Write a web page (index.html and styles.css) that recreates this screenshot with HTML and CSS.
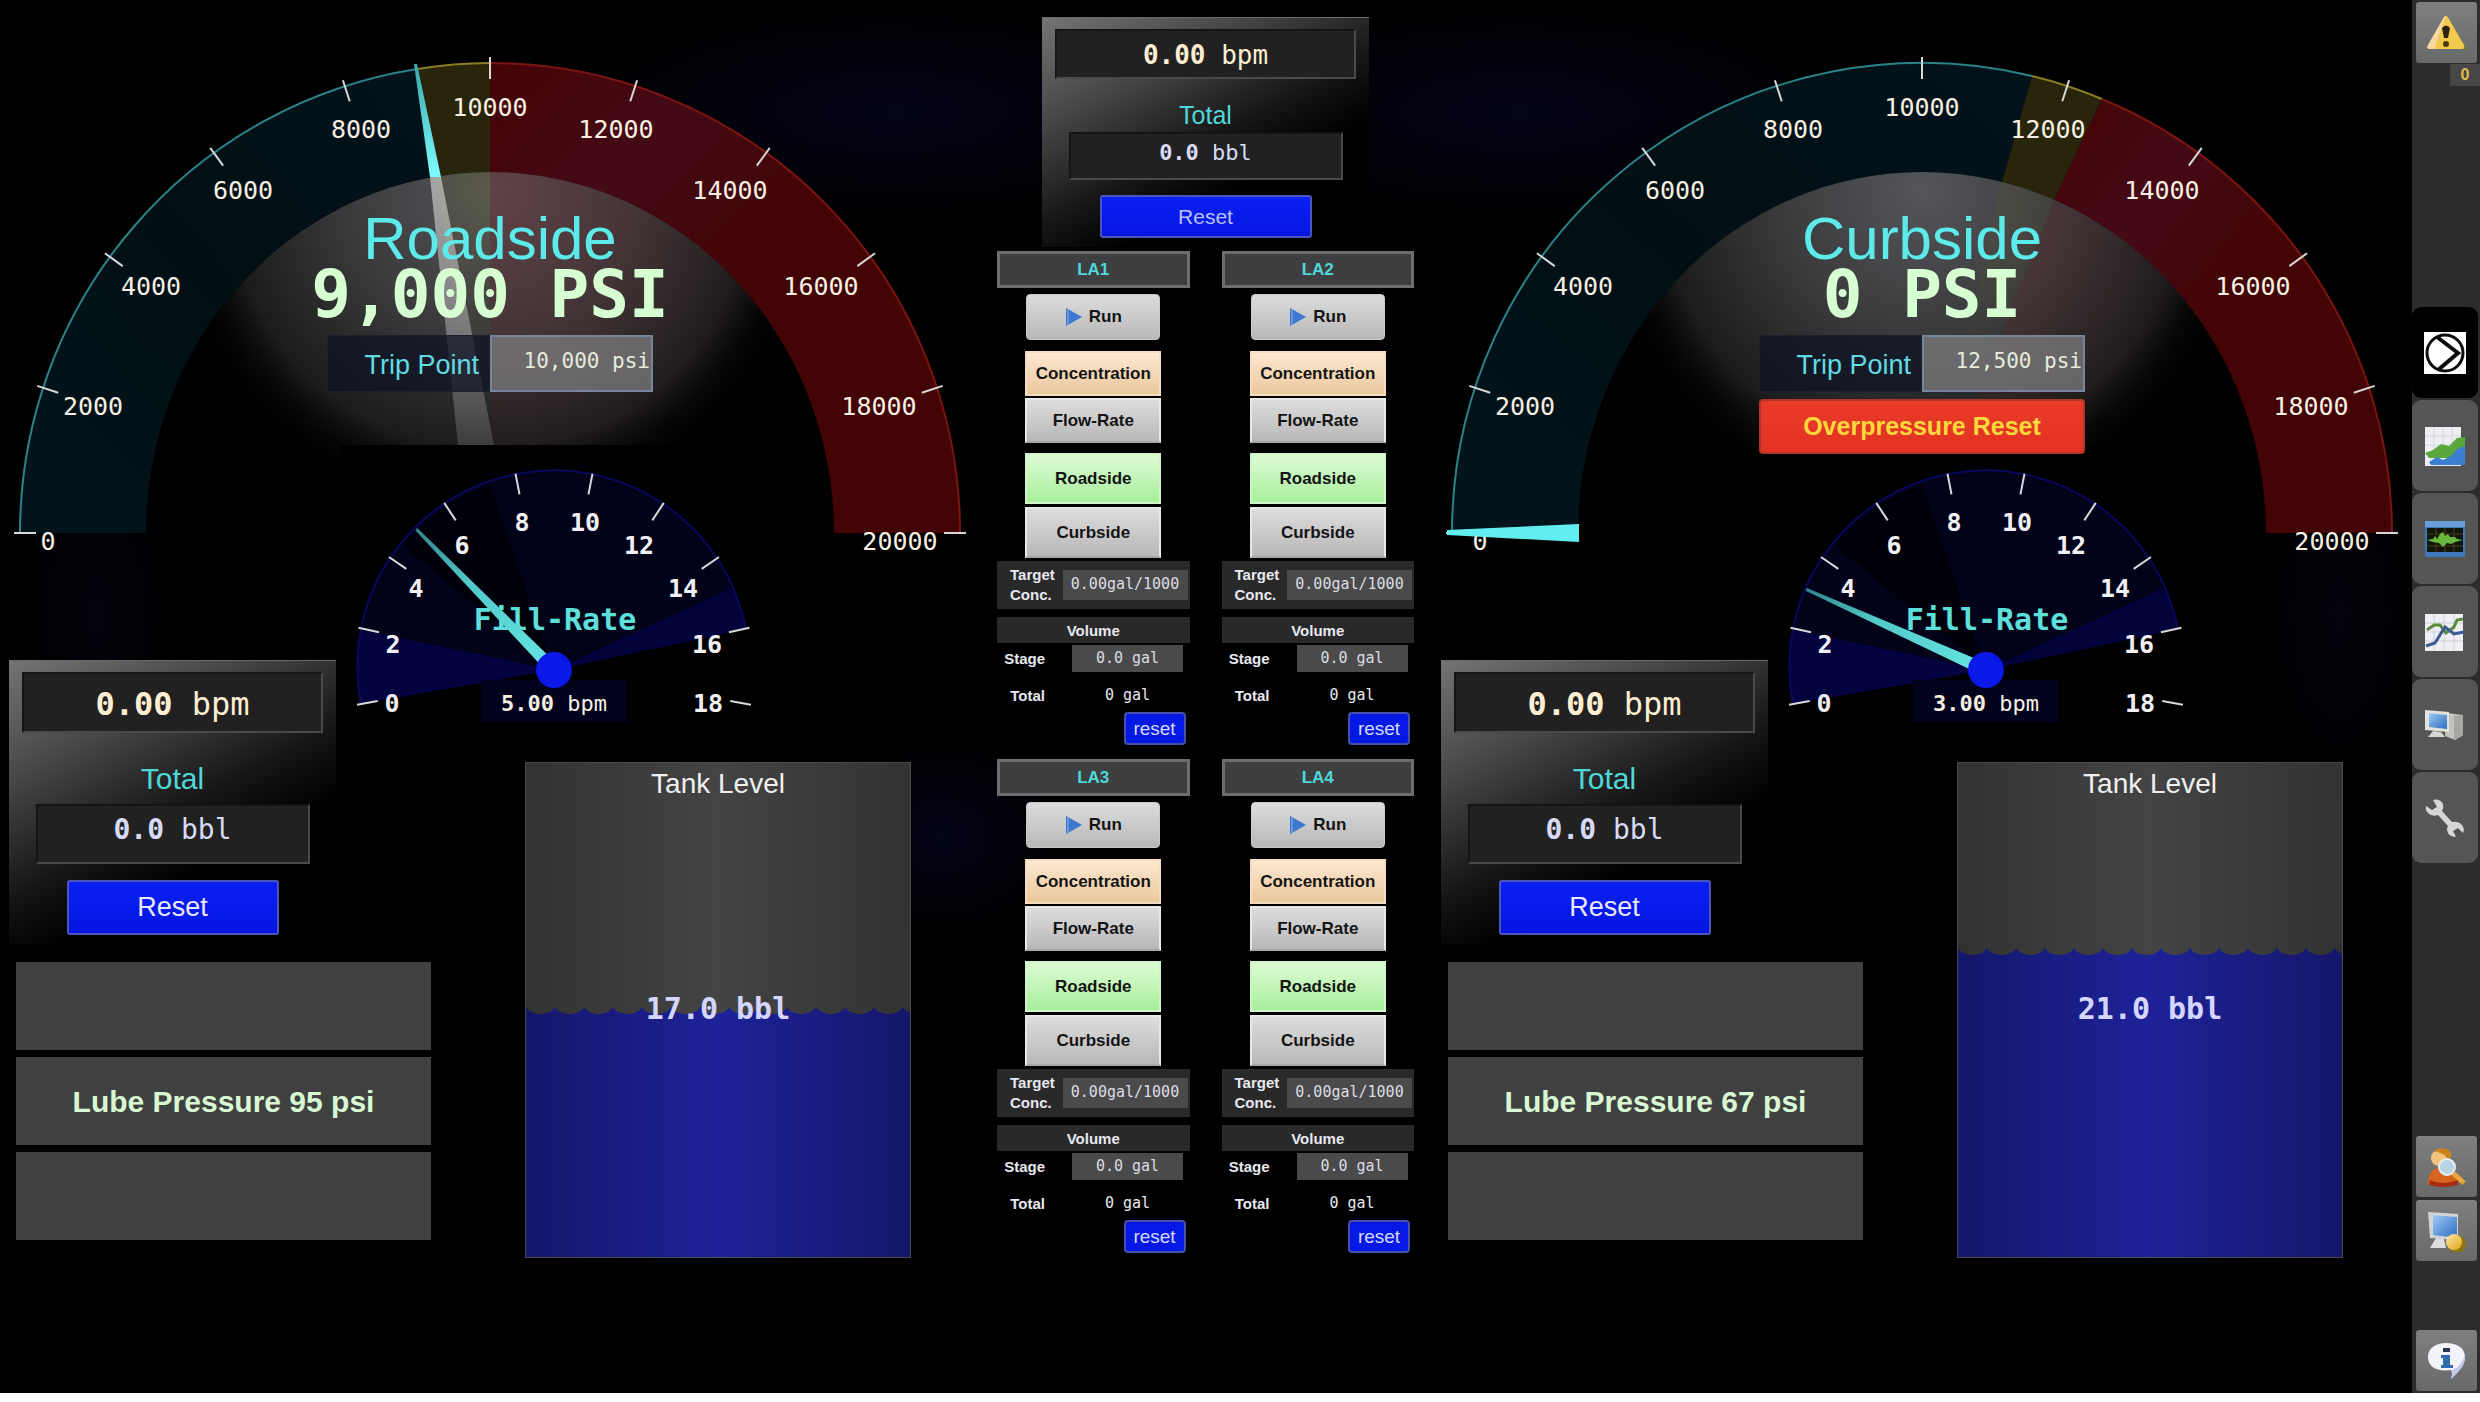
FILE: index.html
```html
<!DOCTYPE html>
<html lang="en">
<head>
<meta charset="utf-8">
<meta name="viewport" content="width=device-width, initial-scale=1">
<title>Pump Overview</title>
<link rel="stylesheet" href="styles.css">
</head>
<body>
<svg class="defs" width="0" height="0" aria-hidden="true">
  <defs>
    <radialGradient id="glow" gradientUnits="userSpaceOnUse" cx="490" cy="190" r="325">
      <stop offset="0" stop-color="#55565a"/><stop offset=".45" stop-color="#3a3a3c"/><stop offset=".8" stop-color="#1c1c1c"/><stop offset="1" stop-color="#000" stop-opacity="0"/>
    </radialGradient>
    <radialGradient id="glow-red" gradientUnits="userSpaceOnUse" cx="490" cy="190" r="300">
      <stop offset="0" stop-color="#7a1418" stop-opacity=".3"/><stop offset="1" stop-color="#7a1418" stop-opacity="0"/>
    </radialGradient>
    <radialGradient id="glow-yellow" gradientUnits="userSpaceOnUse" cx="500" cy="180" r="190">
      <stop offset="0" stop-color="#6a6420" stop-opacity=".26"/><stop offset="1" stop-color="#6a6420" stop-opacity="0"/>
    </radialGradient>
    <linearGradient id="ok-band" x1="0" y1="1" x2="1" y2="0">
      <stop offset="0" stop-color="#03141c"/><stop offset=".5" stop-color="#021014"/><stop offset="1" stop-color="#03131c"/>
    </linearGradient>
    <linearGradient id="trip-band" x1="0" y1="0" x2="1" y2="1">
      <stop offset="0" stop-color="#450405"/><stop offset=".25" stop-color="#440a16"/><stop offset=".5" stop-color="#430405"/><stop offset="1" stop-color="#420405"/>
    </linearGradient>
    <linearGradient id="needle" x1="0" y1="0" x2="0" y2="1">
      <stop offset="0" stop-color="#3aa9ae"/><stop offset="1" stop-color="#7dfcff"/>
    </linearGradient>
    <linearGradient id="needle-dim" x1="0" y1="0" x2="0" y2="1">
      <stop offset="0" stop-color="#fff" stop-opacity=".5"/><stop offset=".5" stop-color="#fff" stop-opacity=".34"/><stop offset="1" stop-color="#fff" stop-opacity=".14"/>
    </linearGradient>
    <linearGradient id="needle-fill" x1="0" y1="0" x2="1" y2="0">
      <stop offset="0" stop-color="#2f8488"/><stop offset=".4" stop-color="#52c8c8"/><stop offset="1" stop-color="#62e2e0"/>
    </linearGradient>
    <g id="main-ticks" stroke="#d8d8d8" stroke-width="2">
      <path d="M14 533H36"/>
      <path d="M14 533H36" transform="rotate(18 490 533)"/>
      <path d="M14 533H36" transform="rotate(36 490 533)"/>
      <path d="M14 533H36" transform="rotate(54 490 533)"/>
      <path d="M14 533H36" transform="rotate(72 490 533)"/>
      <path d="M14 533H36" transform="rotate(90 490 533)"/>
      <path d="M14 533H36" transform="rotate(108 490 533)"/>
      <path d="M14 533H36" transform="rotate(126 490 533)"/>
      <path d="M14 533H36" transform="rotate(144 490 533)"/>
      <path d="M14 533H36" transform="rotate(162 490 533)"/>
      <path d="M14 533H36" transform="rotate(180 490 533)"/>
    </g>
    <g id="fill-face">
      <path d="M341 445H715V470H760V724H341Z" fill="#000"/>
      <path d="M554 670L361 704A196 196 0 0 1 746 629Z" fill="#020219"/>
      <path d="M554 670L403 546A196 196 0 0 1 490 485Z" fill="#00000b"/>
      <path d="M554 670L361 704A196 196 0 0 1 362 630Z" fill="#03033f"/>
      <path d="M554 670L732 588A196 196 0 0 1 746 629Z" fill="#03033c"/>
      <path d="M361 704A196 196 0 0 1 746 629" fill="none" stroke="#08085c" stroke-width="2"/>
      <g stroke="#d8d8d8" stroke-width="2">
        <path d="M354 670H375" transform="rotate(-10 554 670)"/>
        <path d="M354 670H375" transform="rotate(12.2 554 670)"/>
        <path d="M354 670H375" transform="rotate(34.4 554 670)"/>
        <path d="M354 670H375" transform="rotate(56.7 554 670)"/>
        <path d="M354 670H375" transform="rotate(78.9 554 670)"/>
        <path d="M354 670H375" transform="rotate(101.1 554 670)"/>
        <path d="M354 670H375" transform="rotate(123.3 554 670)"/>
        <path d="M354 670H375" transform="rotate(145.6 554 670)"/>
        <path d="M354 670H375" transform="rotate(167.8 554 670)"/>
        <path d="M354 670H375" transform="rotate(190 554 670)"/>
      </g>
      <rect x="481" y="680" width="146" height="42" fill="#02021c"/>
    </g>
    <g id="fill-needle">
      <path d="M357 668L357 671L540 676L540 664Z" fill="url(#needle-fill)"/>
    </g>
    <linearGradient id="sky" x1="0" y1="0" x2="1" y2="1"><stop offset="0" stop-color="#9cc8f4"/><stop offset="1" stop-color="#2f6fc4"/></linearGradient>
    <linearGradient id="amber" x1="0" y1="0" x2="1" y2="1"><stop offset="0" stop-color="#ffe6a8"/><stop offset="1" stop-color="#e0a818"/></linearGradient>
  </defs>
</svg>

<div class="app">
  <main class="screen">

    <section class="side" aria-label="Roadside pump">
      <svg class="dials" viewBox="0 0 980 724" preserveAspectRatio="xMidYMin meet" role="img" aria-label="Roadside pressure and fill rate">
        <path d="M20 533A470 470 0 0 1 417 69L436 176A344 361 0 0 0 146 533Z" fill="url(#ok-band)"/>
        <path d="M417 69A470 470 0 0 1 490 63V172A344 361 0 0 0 436 176Z" fill="#29250b"/>
        <path d="M490 63A470 470 0 0 1 960 533H834A344 361 0 0 0 490 172Z" fill="url(#trip-band)"/>
        <path d="M146 533A344 361 0 0 1 834 533Z" fill="url(#glow)"/>
        <path d="M490 533L436 176A344 361 0 0 1 490 172Z" fill="url(#glow-yellow)"/>
        <path d="M490 533V172A344 361 0 0 1 834 533Z" fill="url(#glow-red)"/>
        <path d="M20 533A470 470 0 0 1 417 69" class="edge edge-ok"/>
        <path d="M417 69A470 470 0 0 1 490 63" class="edge edge-warn"/>
        <path d="M490 63A470 470 0 0 1 960 533" class="edge edge-trip"/>
        <use href="#main-ticks"/>
        <g class="scale">
          <text x="48" y="550">0</text><text x="93" y="415">2000</text><text x="151" y="295">4000</text><text x="243" y="199">6000</text><text x="361" y="138">8000</text><text x="490" y="116">10000</text><text x="616" y="138">12000</text><text x="730" y="199">14000</text><text x="821" y="295">16000</text><text x="879" y="415">18000</text><text x="900" y="550">20000</text>
        </g>
        <path d="M430 177H441L494 445H458Z" fill="url(#needle-dim)"/>
        <path d="M414 64H417L441 177H430Z" fill="url(#needle)"/>
        <use href="#fill-face"/>
        <g class="scale scale-fill">
          <text x="392" y="712">0</text><text x="393" y="653">2</text><text x="416" y="597">4</text><text x="462" y="554">6</text><text x="522" y="531">8</text><text x="585" y="531">10</text><text x="639" y="554">12</text><text x="683" y="597">14</text><text x="707" y="653">16</text><text x="708" y="712">18</text>
        </g>
        <text class="fill-title" x="555" y="630">Fill-Rate</text>
        <use href="#fill-needle" transform="rotate(45.5 554 670)"/>
        <circle cx="554" cy="670" r="18" fill="#0a18e8"/>
        <text class="fill-value" x="554" y="711"><tspan class="num">5.00</tspan> bpm</text>
      </svg>

      <div class="readout">
        <h2>Roadside</h2>
        <p class="pressure">9,000 PSI</p>
        <div class="trip">
          <label for="trip-r">Trip Point</label><input id="trip-r" type="text" value="10,000 psi">
        </div>
      </div>

      <div class="stack">
        <div class="flow">
          <output class="flow-rate"><b>0.00</b> bpm</output>
          <span class="flow-label">Total</span>
          <output class="flow-total"><b>0.0</b> bbl</output>
          <button class="flow-reset" type="button">Reset</button>
        </div>
        <div class="status">
          <p></p>
          <p>Lube Pressure 95 psi</p>
          <p></p>
        </div>
      </div>

      <div class="tank">
        <div class="water" style="height:51%"></div>
        <h3>Tank Level</h3>
        <output>17.0 bbl</output>
      </div>
    </section>

    <section class="center" aria-label="Liquid additives">
      <div class="flow flow-small">
        <output class="flow-rate"><b>0.00</b> bpm</output>
        <span class="flow-label">Total</span>
        <output class="flow-total"><b>0.0</b> bbl</output>
        <button class="flow-reset" type="button">Reset</button>
      </div>

      <div class="units">
        <article class="unit">
          <h3>LA1</h3>
          <div class="choices">
            <button class="run" type="button"><svg width="18" height="20" viewBox="0 0 18 20" aria-hidden="true"><path d="M1 1L17 10L1 19Z" fill="#3f78cf"/><path d="M3 1V19" stroke="#8fb4ea" stroke-width="1"/></svg>Run</button>
            <div class="pair"><button class="on-amber" type="button" aria-pressed="true">Concentration</button><button type="button">Flow-Rate</button></div>
            <div class="pair pair-tall"><button class="on-green" type="button" aria-pressed="true">Roadside</button><button type="button">Curbside</button></div>
          </div>
          <div class="target"><label for="t1">Target<br>Conc.</label><input id="t1" type="text" value="0.00gal/1000"></div>
          <h4>Volume</h4>
          <div class="stage"><label for="s1">Stage</label><input id="s1" type="text" value="0.0 gal"></div>
          <div class="total"><span>Total</span><output>0 gal</output></div>
          <button class="reset" type="button">reset</button>
        </article>
        <article class="unit">
          <h3>LA2</h3>
          <div class="choices">
            <button class="run" type="button"><svg width="18" height="20" viewBox="0 0 18 20" aria-hidden="true"><path d="M1 1L17 10L1 19Z" fill="#3f78cf"/><path d="M3 1V19" stroke="#8fb4ea" stroke-width="1"/></svg>Run</button>
            <div class="pair"><button class="on-amber" type="button" aria-pressed="true">Concentration</button><button type="button">Flow-Rate</button></div>
            <div class="pair pair-tall"><button class="on-green" type="button" aria-pressed="true">Roadside</button><button type="button">Curbside</button></div>
          </div>
          <div class="target"><label for="t2">Target<br>Conc.</label><input id="t2" type="text" value="0.00gal/1000"></div>
          <h4>Volume</h4>
          <div class="stage"><label for="s2">Stage</label><input id="s2" type="text" value="0.0 gal"></div>
          <div class="total"><span>Total</span><output>0 gal</output></div>
          <button class="reset" type="button">reset</button>
        </article>
        <article class="unit">
          <h3>LA3</h3>
          <div class="choices">
            <button class="run" type="button"><svg width="18" height="20" viewBox="0 0 18 20" aria-hidden="true"><path d="M1 1L17 10L1 19Z" fill="#3f78cf"/><path d="M3 1V19" stroke="#8fb4ea" stroke-width="1"/></svg>Run</button>
            <div class="pair"><button class="on-amber" type="button" aria-pressed="true">Concentration</button><button type="button">Flow-Rate</button></div>
            <div class="pair pair-tall"><button class="on-green" type="button" aria-pressed="true">Roadside</button><button type="button">Curbside</button></div>
          </div>
          <div class="target"><label for="t3">Target<br>Conc.</label><input id="t3" type="text" value="0.00gal/1000"></div>
          <h4>Volume</h4>
          <div class="stage"><label for="s3">Stage</label><input id="s3" type="text" value="0.0 gal"></div>
          <div class="total"><span>Total</span><output>0 gal</output></div>
          <button class="reset" type="button">reset</button>
        </article>
        <article class="unit">
          <h3>LA4</h3>
          <div class="choices">
            <button class="run" type="button"><svg width="18" height="20" viewBox="0 0 18 20" aria-hidden="true"><path d="M1 1L17 10L1 19Z" fill="#3f78cf"/><path d="M3 1V19" stroke="#8fb4ea" stroke-width="1"/></svg>Run</button>
            <div class="pair"><button class="on-amber" type="button" aria-pressed="true">Concentration</button><button type="button">Flow-Rate</button></div>
            <div class="pair pair-tall"><button class="on-green" type="button" aria-pressed="true">Roadside</button><button type="button">Curbside</button></div>
          </div>
          <div class="target"><label for="t4">Target<br>Conc.</label><input id="t4" type="text" value="0.00gal/1000"></div>
          <h4>Volume</h4>
          <div class="stage"><label for="s4">Stage</label><input id="s4" type="text" value="0.0 gal"></div>
          <div class="total"><span>Total</span><output>0 gal</output></div>
          <button class="reset" type="button">reset</button>
        </article>
      </div>
    </section>

    <section class="side" aria-label="Curbside pump">
      <svg class="dials" viewBox="0 0 980 724" preserveAspectRatio="xMidYMin meet" role="img" aria-label="Curbside pressure and fill rate">
        <path d="M20 533A470 470 0 0 1 600 76L570 182A344 361 0 0 0 146 533Z" fill="url(#ok-band)"/>
        <path d="M600 76A470 470 0 0 1 670 99L622 200A344 361 0 0 0 570 182Z" fill="#29250b"/>
        <path d="M670 99A470 470 0 0 1 960 533H834A344 361 0 0 0 622 200Z" fill="url(#trip-band)"/>
        <path d="M146 533A344 361 0 0 1 834 533Z" fill="url(#glow)"/>
        <path d="M490 533L570 182A344 361 0 0 1 622 200Z" fill="url(#glow-yellow)"/>
        <path d="M490 533L622 200A344 361 0 0 1 834 533Z" fill="url(#glow-red)"/>
        <path d="M20 533A470 470 0 0 1 600 76" class="edge edge-ok"/>
        <path d="M600 76A470 470 0 0 1 670 99" class="edge edge-warn"/>
        <path d="M670 99A470 470 0 0 1 960 533" class="edge edge-trip"/>
        <use href="#main-ticks"/>
        <g class="scale">
          <text x="48" y="550">0</text><text x="93" y="415">2000</text><text x="151" y="295">4000</text><text x="243" y="199">6000</text><text x="361" y="138">8000</text><text x="490" y="116">10000</text><text x="616" y="138">12000</text><text x="730" y="199">14000</text><text x="821" y="295">16000</text><text x="879" y="415">18000</text><text x="900" y="550">20000</text>
        </g>
        <path d="M15 530V535L147 542V524Z" fill="#62eef0"/>
        <use href="#fill-face"/>
        <g class="scale scale-fill">
          <text x="392" y="712">0</text><text x="393" y="653">2</text><text x="416" y="597">4</text><text x="462" y="554">6</text><text x="522" y="531">8</text><text x="585" y="531">10</text><text x="639" y="554">12</text><text x="683" y="597">14</text><text x="707" y="653">16</text><text x="708" y="712">18</text>
        </g>
        <text class="fill-title" x="555" y="630">Fill-Rate</text>
        <use href="#fill-needle" transform="rotate(24 554 670)"/>
        <circle cx="554" cy="670" r="18" fill="#0a18e8"/>
        <text class="fill-value" x="554" y="711"><tspan class="num">3.00</tspan> bpm</text>
      </svg>

      <div class="readout">
        <h2>Curbside</h2>
        <p class="pressure">0 PSI</p>
        <div class="trip">
          <label for="trip-c">Trip Point</label><input id="trip-c" type="text" value="12,500 psi">
        </div>
        <button class="overpressure" type="button">Overpressure Reset</button>
      </div>

      <div class="stack">
        <div class="flow">
          <output class="flow-rate"><b>0.00</b> bpm</output>
          <span class="flow-label">Total</span>
          <output class="flow-total"><b>0.0</b> bbl</output>
          <button class="flow-reset" type="button">Reset</button>
        </div>
        <div class="status">
          <p></p>
          <p>Lube Pressure 67 psi</p>
          <p></p>
        </div>
      </div>

      <div class="tank">
        <div class="water" style="height:63%"></div>
        <h3>Tank Level</h3>
        <output>21.0 bbl</output>
      </div>
    </section>
  </main>

  <nav class="rail" aria-label="Screens">
    <button class="tile" type="button" aria-label="Alarms">
      <svg width="42" height="36" viewBox="0 0 42 36"><path d="M20 2L40 34H32Z" fill="#96760f"/><path d="M20 1Q22 1 23 4L38 30Q39 34 36 34H4Q0 34 2 30L17 4Q18 1 20 1Z" fill="#f3cb4c"/><path d="M17 4Q18 1 20 1L8 34H4Q0 34 2 30Z" fill="#f6d9a8"/><path d="M16 13Q20 8 24 13L22 23H18Z" fill="#2c2410"/><ellipse cx="20" cy="29" rx="3" ry="3" fill="#4a3c10"/></svg>
    </button>
    <span class="count">0</span>
    <button class="tab tab-on" type="button" aria-label="Overview">
      <svg width="42" height="42" viewBox="0 0 42 42"><rect width="42" height="42" fill="#fff"/><circle cx="21" cy="21" r="18" fill="none" stroke="#0c0c0c" stroke-width="3"/><path d="M13 5L34 21L14 38" fill="none" stroke="#0c0c0c" stroke-width="4"/></svg>
    </button>
    <button class="tab" type="button" aria-label="Area chart">
      <svg width="40" height="40" viewBox="0 0 40 40"><path d="M0 1H36V40H0Z" fill="#eeeef2"/><path d="M0 10H36M0 19H36M9 1V40M18 1V40M27 1V40" stroke="#d4d4dc"/><path d="M0 27L8 24L16 18L24 20L32 12L40 11V32H4Z" fill="#5aa73c"/><path d="M4 36L12 31L18 34L26 30L32 23L40 20V39H6Z" fill="#3c7fd0"/></svg>
    </button>
    <button class="tab" type="button" aria-label="Waveform">
      <svg width="40" height="36" viewBox="0 0 40 36"><rect width="40" height="36" rx="2" fill="#3f78bc"/><rect y="0" width="40" height="6" fill="#6a9edb"/><rect x="2" y="7" width="36" height="24" fill="#10160c"/><path d="M2 13H38M2 25H38M11 7V31M20 7V31M29 7V31" stroke="#4a3a12"/><path d="M2 19L8 18L10 15L12 18L15 13L18 11L20 15L23 13L25 16L30 16L32 18L38 19L30 21L26 23L22 22L18 26L14 22L8 21Z" fill="#68b83e"/></svg>
    </button>
    <button class="tab" type="button" aria-label="Trends">
      <svg width="40" height="38" viewBox="0 0 40 38"><rect y="1" width="38" height="37" fill="#efeff4"/><path d="M0 10H38M0 19H38M0 28H38M9 1V38M19 1V38M29 1V38" stroke="#cfcfda"/><path d="M2 17L9 12L15 12L21 20L29 14L32 7L38 6" fill="none" stroke="#5c8a3c" stroke-width="3"/><path d="M1 33L10 30L20 14L29 21L39 19" fill="none" stroke="#3c5c94" stroke-width="3"/></svg>
    </button>
    <button class="tab" type="button" aria-label="Stations">
      <svg width="40" height="32" viewBox="0 0 40 32"><path d="M22 4L38 6V26L30 31L20 27Z" fill="#c4c2bc"/><path d="M30 7V30" stroke="#8e8c88" stroke-width="1"/><path d="M30 7L38 6V26L30 31Z" fill="#a9a7a2"/><path d="M0 1L24 3V23L0 21Z" fill="#e4e2dc"/><path d="M4 4L22 6V20L4 18Z" fill="url(#sky)"/><path d="M8 22L16 23L20 28H3Z" fill="#d8d6d0"/></svg>
    </button>
    <button class="tab" type="button" aria-label="Settings">
      <svg width="40" height="40" viewBox="0 0 40 40"><path d="M1 8L7 12L12 9L8 2Q15 0 18 6Q19 10 17 13L27 24Q33 23 37 27Q40 31 38 35L33 30L28 33L31 39Q23 39 22 32Q22 29 23 28L13 17Q7 19 3 15Q0 12 1 8Z" fill="#d6d6d4"/></svg>
    </button>
    <div class="tools">
      <button class="tile" type="button" aria-label="Find user">
        <svg width="42" height="42" viewBox="0 0 42 42"><path d="M2 38Q2 24 12 22L24 24Q32 28 32 38Q16 42 2 38Z" fill="#d86420"/><path d="M4 34Q16 40 32 34V39Q16 43 3 39Z" fill="#a82c14"/><circle cx="13" cy="12" r="8" fill="#f3c27c"/><path d="M8 5Q14 0 23 4Q28 9 22 15Q20 7 8 5Z" fill="#c9841c"/><path d="M27 27L38 37" stroke="#e8a83c" stroke-width="5"/><circle cx="21" cy="21" r="8" fill="#b8d4e2" stroke="#e6eef2" stroke-width="2"/></svg>
      </button>
      <button class="tile" type="button" aria-label="Lock station">
        <svg width="42" height="42" viewBox="0 0 42 42"><path d="M2 2L32 4V30L4 28Z" fill="#d2d4d6"/><path d="M7 5L31 7V28L7 25Z" fill="url(#sky)"/><path d="M10 28L18 29L20 38L4 38Z" fill="#dcdee0"/><circle cx="31" cy="34" r="9" fill="#8f7414"/><circle cx="28" cy="32" r="8" fill="url(#amber)"/></svg>
      </button>
      <button class="tile tile-info" type="button" aria-label="Information">
        <svg width="40" height="38" viewBox="0 0 40 38"><path d="M19 1C30 1 38 6 38 15C38 22 34 27 24 37Q26 31 24 28C10 30 1 25 1 15C1 6 9 1 19 1Z" fill="#f2f2f8"/><path d="M38 12C39 22 34 28 24 37Q26 31 25 28Q34 26 38 12Z" fill="#c0c8ea"/><rect x="16" y="6" width="7" height="4" fill="#2a3550"/><path d="M14 13H23V23H26V26H14V23H16V16H14Z" fill="#2f6cb0"/></svg>
      </button>
    </div>
  </nav>
</div>
</body>
</html>
```
FILE: styles.css
```css
:root {
  --sans: "Liberation Sans", Arial, sans-serif;
  --mono: "DejaVu Sans Mono", monospace;
  --cyan: #4fd8da;
}

* { box-sizing: border-box; }

body {
  margin: 0;
  padding-bottom: 9px;
  min-height: 100vh;
  display: flex;
  flex-direction: column;
  background: #fff;
  color: #e8e8f0;
  font-family: var(--sans);
}

h2, h3, h4, p { margin: 0; font-weight: 400; }
button, input { margin: 0; padding: 0; font-family: inherit; color: inherit; }
button { cursor: pointer; }
.defs { position: absolute; }

.app { flex: 1; display: flex; background: #000; }

.screen {
  flex: 1;
  display: grid;
  grid-template-columns: minmax(0, 1fr) 452px minmax(0, 1fr);
  background:
    radial-gradient(ellipse 340px 110px at 37% 8%, #040418, transparent),
    radial-gradient(ellipse 340px 110px at 63% 8%, #040418, transparent),
    radial-gradient(ellipse 130px 100px at 39% 60%, #040418, transparent),
    radial-gradient(ellipse 90px 200px at 4% 44%, #03030c, transparent),
    radial-gradient(ellipse 90px 200px at 97% 44%, #03030c, transparent),
    #000;
}

/* One pump: dials on top, flow and status at the left, tank at the right */
.side {
  display: grid;
  grid-template-columns: 431px minmax(0, 1fr);
  grid-template-rows: 660px 64px auto;
  align-content: start;
}

.dials { grid-area: 1 / 1 / 3 / 3; width: 100%; height: 724px; }
.edge { fill: none; stroke-width: 2; }
.edge-ok { stroke: #2b8388; }
.edge-warn { stroke: #8c7c24; }
.edge-trip { stroke: #7c1410; }
.scale { font: 25px var(--mono); fill: #f6efe2; text-anchor: middle; }
.scale-fill { font-weight: 700; fill: #f0f0f4; }
.fill-title { font: 700 30px var(--mono); fill: #5ce0dc; text-anchor: middle; }
.fill-value { font: 22px var(--mono); fill: #f6efe2; text-anchor: middle; }
.num { font-weight: 700; }

.readout {
  grid-area: 1 / 1 / 2 / 3;
  justify-self: center;
  z-index: 1;
  width: 326px;
  padding-top: 211px;
  display: flex;
  flex-direction: column;
  align-items: center;
}
.readout h2 { font-size: 60px; line-height: 56px; color: #5ceaea; }
.pressure {
  font: 700 66px/56px var(--mono);
  white-space: nowrap;
  color: #d6ffd2;
}
.trip { margin-top: 12px; width: 100%; height: 57px; display: flex; }
.trip label {
  flex: 1;
  padding: 3px 10px 0 0;
  border: 1px solid #1c1f2c;
  background: rgba(12, 16, 34, .72);
  font-size: 27px;
  line-height: 52px;
  text-align: right;
  white-space: nowrap;
  color: #62dce2;
}
.trip input {
  width: 163px;
  padding: 0 1px 5px 0;
  border: 2px solid #75869a;
  background: rgba(128, 128, 130, .72);
  font: 21px var(--mono);
  text-align: right;
  color: #e6ecdc;
}
.overpressure {
  margin-top: 7px;
  width: 100%;
  height: 55px;
  border: 2px solid #b0362c;
  border-radius: 4px;
  background: linear-gradient(#ea3a28, #e23222);
  font-size: 25px;
  font-weight: 700;
  color: #ffd83c;
}

.stack { grid-area: 2 / 1 / 4 / 2; }

.flow {
  width: 327px;
  height: 284px;
  margin-left: 9px;
  padding: 11px 13px 0;
  display: flex;
  flex-direction: column;
  align-items: center;
  border-top: 1px solid #6a6a6a;
  background: linear-gradient(152deg, #747474, #444 28%, #161616 52%, #000 68%);
  font-size: 32px;
}
.flow output { width: 100%; font-family: var(--mono); text-align: center; border: 2px solid #151515; border-right-color: #4a4a4a; border-bottom-color: #4a4a4a; background: #212121; }
.flow .flow-rate { height: 61px; padding-top: 2px; line-height: 57px; color: #ffeed2; }
.flow-label { margin: 26px 0 5px; font-size: 30px; line-height: 40px; color: var(--cyan); }
.flow .flow-total { width: 274px; height: 60px; font-size: 28px; line-height: 47px; color: #d8daf6; }
.flow-reset {
  margin-top: 16px;
  width: 212px;
  height: 55px;
  border: 2px solid #4a56b8;
  border-radius: 3px;
  background: linear-gradient(#0a20f4, #0616e0);
  font-size: 27px;
  color: #e8e8ff;
}

.flow-small { height: 230px; margin: 17px auto 4px; font-size: 26px; }
.flow-small .flow-rate { height: 50px; padding-top: 0; line-height: 48px; }
.flow-small .flow-label { margin: 24px 0 5px; font-size: 25px; line-height: 24px; }
.flow-small .flow-total { height: 48px; font-size: 22px; line-height: 38px; }
.flow-small .flow-reset { margin-top: 15px; height: 43px; font-size: 21px; color: #b8c0ff; }

.status { margin: 18px 0 0 16px; display: grid; gap: 7px; }
.status p {
  height: 88px;
  background: #404040;
  font-size: 30px;
  font-weight: 700;
  line-height: 90px;
  text-align: center;
  color: #d8f8d4;
}

.tank {
  grid-area: 3 / 2;
  position: relative;
  height: 496px;
  margin: 38px 69px 0 94px;
  border: 1px solid #4a4a4a;
  background: linear-gradient(90deg, #323232, #444 50%, #323232);
  text-align: center;
}
.tank h3 { position: relative; font-size: 28px; line-height: 42px; color: #f0f0f0; }
.tank output {
  position: absolute;
  inset: 0;
  font: 700 30px/492px var(--mono);
  color: #d4d6ff;
}
.water {
  position: absolute;
  inset: auto 0 0;
  background: linear-gradient(90deg, #15176a, #1e2298 50%, #15176a);
  mask:
    radial-gradient(ellipse 15px 9px at 50% 0, transparent 96%, #000) 0 0 / 29px 10px repeat-x,
    linear-gradient(#000, #000) 0 10px / 100% 100% no-repeat;
}

.center { padding: 0 18px 0 17px; }

.units { display: grid; grid-template-columns: 1fr 1fr; column-gap: 32px; row-gap: 13px; }
.unit { display: flex; flex-direction: column; font-size: 15px; font-weight: 700; }
.unit h3 {
  height: 37px;
  border: 3px solid #6c6e70;
  background: #3e3f40;
  font-size: 17px;
  font-weight: 700;
  line-height: 32px;
  text-align: center;
  color: var(--cyan);
}
.choices { align-self: center; width: 136px; display: flex; flex-direction: column; }
.choices button {
  height: 45px;
  border: 2px solid #e8e8e8;
  border-bottom-color: #a8a8a8;
  background: linear-gradient(#dcdcdc, #b8b8b8);
  font-size: 17px;
  font-weight: 700;
  color: #141414;
}
.choices .run {
  margin: 6px 1px 11px;
  height: 46px;
  display: flex;
  align-items: center;
  justify-content: center;
  gap: 6px;
  border: 1px solid #c8c8c8;
  border-radius: 4px;
}
.pair { display: grid; gap: 2px; margin-bottom: 10px; }
.pair-tall { gap: 3px; margin-bottom: 3px; }
.pair-tall button { height: 51px; }
.choices .on-amber { border-color: #f4dcc0; background: linear-gradient(#fde8d2, #eac89c); }
.choices .on-green { border-color: #d0f4c8; background: linear-gradient(#dcfcd4, #a8ee9c); }

.target { height: 48px; padding: 0 2px 0 13px; display: flex; align-items: center; justify-content: space-between; background: #29292a; line-height: 20px; }
.unit input { border: 0; background: #4a4a4b; font: 15px var(--mono); text-align: center; color: #dcdce2; }
.target input { width: 125px; height: 30px; padding-bottom: 3px; }
.unit h4 { height: 26px; margin: 8px 0 2px; background: #29292a; font-size: 15px; font-weight: 700; line-height: 27px; text-align: center; }
.stage, .total { display: grid; grid-template-columns: 48px 111px; column-gap: 27px; align-items: center; }
.stage label, .total span { text-align: right; }
.stage input { width: 111px; height: 27px; padding-bottom: 2px; }
.total { margin-top: 7px; height: 32px; }
.total output { font: 15px var(--mono); text-align: center; }
.reset {
  align-self: flex-end;
  width: 62px;
  height: 33px;
  margin: 1px 4px 1px 0;
  border: 2px solid #4650a8;
  border-radius: 4px;
  background: #0618e4;
  font-size: 19px;
  color: #d4d8ff;
}

.rail { width: 68px; padding: 2px 0; display: flex; flex-direction: column; background: #2b2c2b; }
.rail button { display: flex; align-items: center; justify-content: center; border: 0; }
.tile { width: 61px; height: 61px; margin-left: 4px; border-radius: 3px; background: linear-gradient(#7e7f80, #686969); }
.count {
  align-self: flex-end;
  width: 30px;
  height: 22px;
  margin: 1px 0 221px;
  background: #474645;
  font-size: 16px;
  font-weight: 700;
  line-height: 22px;
  text-align: center;
  color: #e0bc4c;
}
.tab { width: 66px; height: 91px; margin-bottom: 2px; border-radius: 9px; background: #555; }
.rail .tab-on { background: #000; }
.tools { margin-top: auto; display: grid; gap: 3px; }
.tile-info { margin-top: 66px; }
```
